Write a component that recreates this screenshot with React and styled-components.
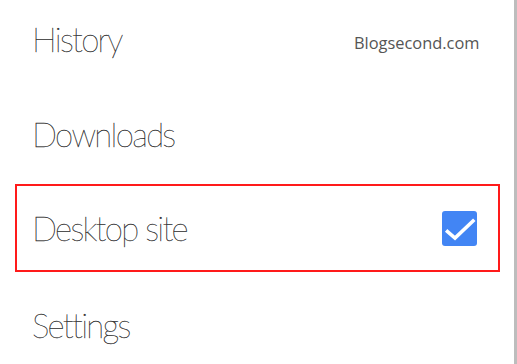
import React from "react";
import styled, { createGlobalStyle } from "styled-components";

const Global = createGlobalStyle`
  html, body {
    margin: 0;
    padding: 0;
    background: #fff;
  }
`;

const items = [
  { label: "History" },
  { label: "Downloads" },
  { label: "Desktop site", checked: true, highlight: true },
  { label: "Settings" }
];

const CheckIcon = () => (
  <svg width="35" height="35" viewBox="0 0 35 35">
    <path
      d="M5.5 20.5 L13 27 L31 10"
      fill="none"
      stroke="#fff"
      strokeWidth="3.6"
      strokeLinecap="square"
    />
  </svg>
);

const App = () => {
  return (
    <Page>
      <Global />
      <Menu>
        {items.map((item) => (
          <Row key={item.label} highlight={item.highlight}>
            <Label>{item.label}</Label>
            {item.checked && (
              <Box>
                <CheckIcon />
              </Box>
            )}
          </Row>
        ))}
      </Menu>
      <Watermark>Blogsecond.com</Watermark>
      <Edge />
    </Page>
  );
};

const Page = styled.div`
  position: relative;
  width: 517px;
  height: 364px;
  overflow: hidden;
  background: #fff;
`;

const Menu = styled.div`
  display: flex;
  flex-direction: column;
  margin-top: -9px;
  padding-left: 15px;
  width: 485px;
`;

const Row = styled.div.withConfig({
  shouldForwardProp: (p) => p !== "highlight"
})`
  box-sizing: border-box;
  height: ${(p) => (p.highlight ? "88px" : "95.5px")};
  margin: ${(p) => (p.highlight ? "2px 0 5.5px" : "0")};
  display: flex;
  align-items: center;
  justify-content: space-between;
  padding: 0 21px 0 15px;
  border: 2px solid ${(p) => (p.highlight ? "#ff1a1a" : "transparent")};
`;

const Label = styled.span`
  font-family: "Lato", sans-serif;
  font-weight: 100;
  font-size: 33px;
  color: #2a2a2a;
  -webkit-text-stroke: 0.3px #2a2a2a;
  letter-spacing: -1.7px;
`;

const Box = styled.div`
  width: 35px;
  height: 35px;
  border-radius: 3px;
  background: #4285f4;
  display: flex;
`;

const Watermark = styled.div`
  position: absolute;
  top: 31px;
  left: 354px;
  font-family: "Open Sans", sans-serif;
  font-size: 16.4px;
  color: #555;
`;

const Edge = styled.div`
  position: absolute;
  top: 0;
  right: 0;
  width: 3px;
  height: 100%;
  background: #bdbdbd;
`;

export default App;
